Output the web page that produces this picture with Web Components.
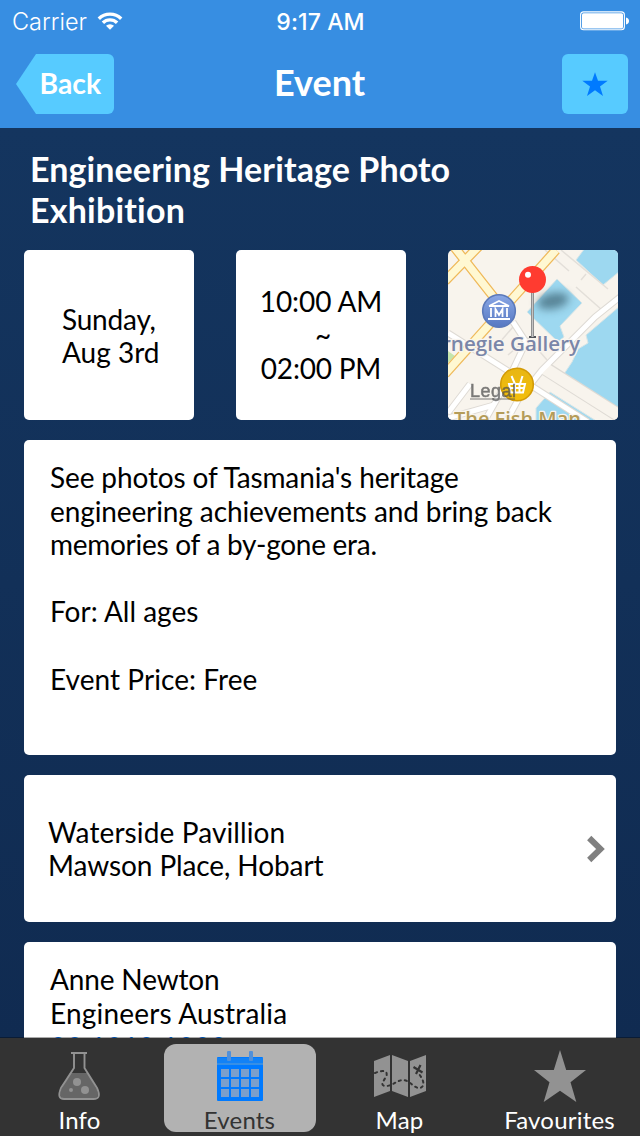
<!DOCTYPE html>
<html lang="en">
<head>
<meta charset="utf-8">
<title>Event</title>
<style>
html, body { margin: 0; height: 100%; overflow: hidden; }
body { font-family: Lato, "Liberation Sans", sans-serif; font-size: 28px; line-height: 33.6px; color: #000; font-variant-ligatures: none; }
</style>
</head>
<body>
<event-screen></event-screen>
<script>
const define = (name, html) => {
  const template = document.createElement('template');
  template.innerHTML = html.trim();
  customElements.define(name, class extends HTMLElement {
    constructor() {
      super();
      this.attachShadow({ mode: 'open' }).append(template.content.cloneNode(true));
    }
  });
};

define('status-bar', `
<style>
:host { display: grid; grid-template-columns: 1fr auto 1fr; align-items: center; height: 40px; padding: 1px 11px 0 12px; box-sizing: border-box; color: #fff; line-height: 40px; }
.left { display: flex; align-items: center; gap: 10px; }
.carrier { font-family: Inter, sans-serif; font-weight: 300; font-size: 23.5px; }
.time { font-family: Inter, sans-serif; font-weight: 500; font-size: 23px; letter-spacing: .1px; }
.carrier, .time { position: relative; top: .5px; }
.right { display: flex; justify-content: flex-end; }
svg { display: block; }
</style>
<div class="left"><span class="carrier">Carrier</span>
<svg width="26" height="20" viewBox="0 0 26 20"><g fill="none" stroke="#fff" stroke-width="3.4"><path d="M1.8 7.7A16 16 0 0 1 24.2 7.7"/><path d="M5.9 11.8A10 10 0 0 1 20.1 11.8"/></g><path d="M9 14.8a5.7 5.7 0 0 1 8 0L13 18.8z" fill="#fff"/></svg></div>
<span class="time">9:17 AM</span>
<div class="right"><svg width="49" height="20" viewBox="0 0 49 20"><rect x=".6" y=".9" width="43.8" height="17.9" rx="3" fill="none" stroke="#fff" stroke-width="1.1"/><rect x="2" y="2.3" width="41" height="15.1" rx="1.5" fill="#fff"/><path d="M46 6.5c4 .6 4 6.4 0 7z" fill="#fff"/></svg></div>`);

define('nav-bar', `
<style>
:host { display: grid; grid-template-columns: 1fr auto 1fr; align-items: start; height: 88px; padding: 14px 12px 0 16px; box-sizing: border-box; color: #fff; font-weight: 700; }
.back { position: relative; display: block; width: 98px; height: 60px; font-size: 28.3px; line-height: 58px; }
.back svg { display: block; }
.back span { position: absolute; left: 23.5px; top: 0; }
.title { font-size: 36px; line-height: 56px; margin: 0 5px 0 0; }
.fav { justify-self: end; display: grid; place-items: center; width: 66px; height: 60px; border-radius: 6px; background: #57cbff; }
</style>
<div class="back"><svg width="98" height="60"><path d="M0 30L20 0H92a6 6 0 0 1 6 6V54a6 6 0 0 1-6 6H20z" fill="#57cbff"/></svg><span>Back</span></div>
<div class="title"><slot></slot></div>
<div class="fav"><svg width="26" height="26" viewBox="0 0 26 26"><path d="M13 1.2L16 9.8H25.7L18 15.5L21 25L13 19.3L5 25L8 15.5L.3 9.8H10z" fill="#007aff"/></svg></div>`);

define('text-line', `
<style>
:host { display: block; min-height: 1lh; letter-spacing: var(--track, 0); white-space: nowrap; }
</style><slot></slot>`);

define('info-card', `
<style>
:host { display: block; box-sizing: border-box; background: #fff; border-radius: 5px; overflow: hidden; }
</style><slot></slot>`);

define('link-card', `
<style>
:host { display: flex; align-items: center; justify-content: space-between; box-sizing: border-box; background: #fff; border-radius: 5px; padding: 1px 10px 0 24px; }
</style><div><slot></slot></div><svg width="20" height="28" viewBox="0 0 20 28"><path d="M3.2 3L14.5 14L3.2 25" fill="none" stroke="#808080" stroke-width="6"/></svg>`);

define('mini-map', `
<style>
:host { display: block; width: 170px; height: 170px; border-radius: 5px; overflow: hidden; }
svg { display: block; }
.label { font-family: "Open Sans", "Noto Sans", sans-serif; font-weight: 600; paint-order: stroke; stroke: #f9f5ef; stroke-width: 2.5px; stroke-linejoin: round; }
</style>
<svg width="170" height="170" viewBox="0 0 170 170">
<defs>
<linearGradient id="blue" x2="0" y2="1"><stop stop-color="#89a7e5"/><stop offset="1" stop-color="#5778c2"/></linearGradient>
<linearGradient id="gold" x2="0" y2="1"><stop stop-color="#e8b613"/><stop offset="1" stop-color="#f3be0b"/></linearGradient>
<filter id="soft" x="-50%" y="-80%" width="200%" height="260%"><feGaussianBlur stdDeviation="4.5"/></filter>
</defs>
<rect width="170" height="170" fill="#f8f4ed"/>
<g fill="#9dd8f0" stroke="#d9e5e6" stroke-width="1">
<path d="M137 -2L128 10L155 35L172 21V-2z"/>
<path d="M109 29L79 62L110 92L116 87L112 76L134 53z"/>
<path d="M172 56L138 85L140 93L130 99L124 112L114 127L172 166z"/>
<path d="M102 142L88 158V172H150z"/>
</g>
<path d="M0 101L7 106L0 113z" fill="#c5e5ac"/>
<g fill="none" stroke="#e3dfd9" stroke-width="1.5"><path d="M113 0L160 39M128 37L154 60M133 30L138 24M60 105L80 88L99 110M52 92L65 77M97 0L121 21"/></g>
<g fill="none" stroke="#dedad4" stroke-width="7" stroke-linejoin="round">
<path d="M0 83L65 124L140 172M65 72L78 92L60 130L36 172"/><path d="M172 47L147 67L94 120L70 150L58 172"/><path d="M0 163L22 134M0 168L46 155"/></g>
<path d="M98 119L172 166" stroke="#dedad4" stroke-width="14"/>
<path d="M96 118L172 166" stroke="#f8f4ed" stroke-width="12"/>
<g fill="none" stroke="#fff" stroke-width="5" stroke-linejoin="round">
<path d="M0 83L65 124L140 172M65 72L78 92L60 130L36 172"/><path d="M172 47L147 67L94 120L70 150L58 172"/><path d="M0 163L22 134M0 168L46 155"/></g>
<g fill="none" stroke="#efb95a" stroke-width="10"><path d="M-3 124L108 0"/><path d="M-3 31L33 -6M-4 -16L48 50"/></g>
<g fill="none" stroke="#fff8d2" stroke-width="7.5"><path d="M-3 124L108 0"/><path d="M-3 31L33 -6M-4 -16L48 50"/></g>
<ellipse cx="105" cy="51" rx="16" ry="8" fill="#264958" opacity=".58" transform="rotate(-12 105 51)" filter="url(#soft)"/>
<circle cx="51" cy="61" r="16.3" fill="url(#blue)" stroke="#5b79ba" stroke-width="1.6"/>
<g fill="none" stroke="#fff" stroke-width="1.8"><path d="M41 56L51 51L61 56H41"/><path d="M43 58V67M59 58V67M47.500 67V59L51 65L54.500 59V67M40 69H62"/></g>
<text class="label" x="-6" y="101" font-size="20.5" fill="#7a86a8" textLength="138" lengthAdjust="spacingAndGlyphs">rnegie Gallery</text>
<text class="label" x="6" y="176" font-size="20.5" fill="#b49c59" textLength="127" lengthAdjust="spacingAndGlyphs">The Fish Man</text>
<circle cx="69" cy="134.500" r="16.3" fill="url(#gold)" stroke="#d39b07" stroke-width="1.6"/>
<g fill="none" stroke="#fff" stroke-width="2"><path d="M61 134H77L75 142.500H63zM63.500 126L67 134M74.500 126L72 134M62 138H76M67 134V143M71.500 134V143"/></g>
<g fill="#505050" opacity=".75"><text x="22" y="147" font-family="Liberation Sans, sans-serif" font-size="18" stroke="#505050" stroke-width=".5" textLength="46">Legal</text><path d="M22 148.500h45v1h-45z"/></g>
<path d="M81 86h7v2h-7z" fill="#51545a"/><path d="M83 39h3v48h-3z" fill="#8f8f8f"/><path d="M84 39h1v48h-1z" fill="#c4c4c4"/>
<circle cx="84.500" cy="29.500" r="13.500" fill="#ff3b30"/><circle cx="80" cy="24.700" r="3" fill="#fff"/>
</svg>`);

define('tab-item', `
<style>
:host { display: flex; flex-direction: column; align-items: center; justify-content: space-between; width: 152px; height: 88px; box-sizing: border-box; border-radius: 12px; color: #fff; font-size: 24px; }
:host([selected]) { background: #b2b2b2; color: #333; }
::slotted(svg) { display: block; }
.label { height: 26px; line-height: 27px; letter-spacing: .2px; margin-right: 1px; }
</style>
<slot name="icon"></slot><span class="label"><slot></slot></span>`);

define('tab-bar', `
<style>
:host { display: flex; gap: 8px; height: 98px; box-sizing: border-box; padding: 6px 4px 0; background: #333; position: relative; box-shadow: 0 -1px rgba(0, 0, 0, .33); }
</style>
<tab-item><svg slot="icon" width="60" height="60" viewBox="0 0 60 60"><path d="M20 29H38L47 46Q50 54.500 43 54.500H15Q8 54.500 11 46z" fill="#666"/><path d="M24 8V24L11 44Q6.500 55 14 55H43.500Q52 55 47 44L34.500 24V8" fill="none" stroke="#929292" stroke-width="1.9"/><path d="M21 9H37" stroke="#929292" stroke-width="2"/><g fill="#929292"><circle cx="27" cy="38" r="4"/><circle cx="35" cy="46" r="4"/><circle cx="21" cy="46" r="2"/></g></svg>Info</tab-item>
<tab-item selected><svg slot="icon" width="60" height="60" viewBox="0 0 60 60"><rect x="7" y="13" width="46" height="44" rx="1" fill="#007aff"/><path d="M7 14h46v5H7z" fill="#1282f6"/><path d="M7 19h46v2H7z" fill="#368fe6"/><g fill="#7b9fcb"><path d="M11 25h8v8h-8zm10 0h8v8h-8zm10 0h8v8h-8zm10 0h8v8h-8zM11 35h8v8h-8zm10 0h8v8h-8zm10 0h8v8h-8zm10 0h8v8h-8zM11 45h8v8h-8zm10 0h8v8h-8zm10 0h8v8h-8zm10 0h8v8h-8z"/></g><g fill="#5090da"><rect x="17" y="7" width="4" height="10" rx="1"/><rect x="39" y="7" width="4" height="10" rx="1"/></g></svg>Events</tab-item>
<tab-item><svg slot="icon" width="60" height="60" viewBox="0 0 60 60"><path d="M4 17L20 11V47L4 53zM22 11L38 17V53L22 47zM40 17L56 11V47L40 53z" fill="#929292"/><path d="M5 29C12 26 19 26 16 33C12 39 10 42 17 42C24 41 27 36 34 36C40 37 45 45 50 44C56 42 53 35 49 30" fill="none" stroke="#333" stroke-width="2" stroke-linecap="round" stroke-dasharray="2.200 3.900"/><path d="M43.500 23L52.500 28.500M50.500 21L46 30" stroke="#333" stroke-width="2.200"/></svg>Map</tab-item>
<tab-item><svg slot="icon" width="60" height="60" viewBox="0 0 60 60"><path d="M30 6L36.200 26H56L40.500 38.300L46.300 58L30 46.700L13.700 58L19.500 38.300L4 26H23.800z" fill="#929292"/></svg>Favourites</tab-item>`);

define('event-screen', `
<style>
:host { display: flex; flex-direction: column; width: 640px; height: 1136px; background: #378ee2; }
main { flex: 1; min-height: 0; overflow: hidden; display: flex; flex-direction: column; padding: 21px 24px 0; background: linear-gradient(#14355f, #102b51); }
h1 { margin: 0 0 20px; padding-left: 6px; font-size: 34px; line-height: 40.5px; height: 81px; font-weight: 700; color: #fff; --track: .1px; }
main > * { flex-shrink: 0; }
.facts { display: flex; gap: 42px; margin-bottom: 20px; margin-right: -2px; }
.facts info-card { width: 170px; height: 170px; }
.date { padding: 53px 0 0 38px; line-height: 33.2px; }
.time { padding: 35px 0 0; text-align: center; }
.about { height: 315px; padding: 21px 26px 0; margin-bottom: 20px; }
link-card { height: 147px; margin-bottom: 20px; line-height: 33.3px; }
.contact { height: 200px; padding: 21px 26px 0; }
.phone { color: #007aff; padding-top: .9px; }
</style>
<status-bar></status-bar>
<nav-bar>Event</nav-bar>
<main>
<h1><text-line>Engineering Heritage Photo</text-line><text-line style="--track:.2px">Exhibition</text-line></h1>
<div class="facts">
<info-card class="date"><text-line style="--track:-.2px">Sunday,</text-line><text-line>Aug 3rd</text-line></info-card>
<info-card class="time"><text-line style="--track:-.1px">10:00 AM</text-line><text-line style="padding-left:4px">~</text-line><text-line style="--track:-.2px">02:00 PM</text-line></info-card>
<mini-map></mini-map></div>
<info-card class="about"><text-line style="--track:-.12px">See photos of Tasmania's heritage</text-line><text-line style="--track:-.11px">engineering achievements and bring back</text-line><text-line style="--track:-.28px">memories of a by-gone era.</text-line><text-line></text-line><text-line>For: All ages</text-line><text-line></text-line><text-line style="--track:.06px">Event Price: Free</text-line></info-card>
<link-card><text-line style="--track:.12px">Waterside Pavillion</text-line><text-line style="--track:-.1px">Mawson Place, Hobart</text-line></link-card>
<info-card class="contact"><text-line style="--track:-.15px">Anne Newton</text-line><text-line style="--track:.18px">Engineers Australia</text-line><text-line class="phone">03 1010 1000</text-line></info-card>
</main>
<tab-bar></tab-bar>`);
</script>
</body>
</html>
